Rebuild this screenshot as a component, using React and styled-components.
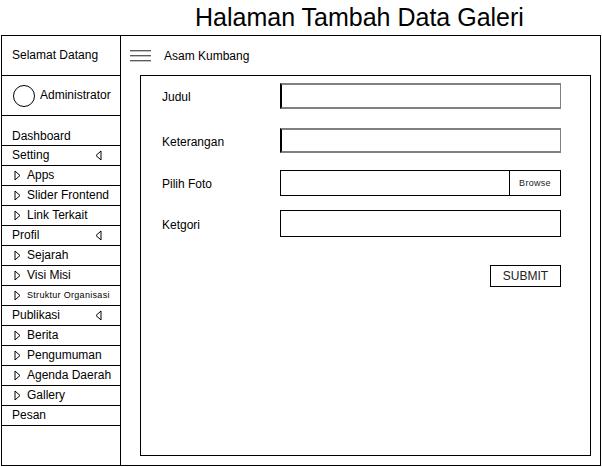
import React from "react";
import styled, { createGlobalStyle } from "styled-components";

const Global = createGlobalStyle`
  * { box-sizing: border-box; }
  html, body { margin: 0; padding: 0; background: #fff; }
  body { font-family: "Liberation Sans", Arial, sans-serif; color: #000; }
`;

const Page = styled.div`
  width: 602px;
  height: 467px;
  display: flex;
  flex-direction: column;
`;

const Title = styled.h1`
  margin: 0;
  height: 35px;
  padding-left: 195px;
  font-size: 25px;
  font-weight: 400;
  line-height: 35px;
  color: #000;
`;

const Frame = styled.div`
  margin-left: 1px;
  width: 600px;
  height: 431px;
  border: 1px solid #000;
  display: grid;
  grid-template-columns: 119px 1fr;
`;

const Sidebar = styled.nav`
  border-right: 1px solid #000;
  display: flex;
  flex-direction: column;
`;

const Row = styled.div`
  height: ${(p) => p.$h || 20}px;
  border-bottom: 1px solid #000;
  display: flex;
  align-items: ${(p) => (p.$bottom ? "flex-end" : "center")};
  padding-left: ${(p) => p.$pad ?? 10}px;
  padding-right: ${(p) => (p.$spread ? 18 : 0)}px;
  font-size: 12px;
  line-height: ${(p) => (p.$bottom ? "18px" : "19px")};
  white-space: nowrap;
  justify-content: ${(p) => (p.$spread ? "space-between" : "flex-start")};

  svg {
    flex: none;
  }
`;

const Avatar = styled.span`
  width: 22px;
  height: 22px;
  border: 1px solid #000;
  border-radius: 50%;
  margin-right: 5px;
  flex: none;
`;

const SubText = styled.span`
  margin-left: 6px;
  font-size: ${(p) => (p.$small ? "9px" : "12px")};
  letter-spacing: ${(p) => (p.$small ? "0.3px" : "0")};
`;

const Main = styled.div`
  display: flex;
  flex-direction: column;
`;

const TopBar = styled.div`
  height: 39px;
  display: flex;
  align-items: center;
  padding-left: 9px;
  gap: 13px;
  font-size: 12px;
`;

const Panel = styled.div`
  flex: 1;
  margin: 0 9px 9px 19px;
  border: 1px solid #000;
  padding: 7px 29px 0 21px;
  display: flex;
  flex-direction: column;
`;

const FormRow = styled.div`
  display: flex;
  align-items: center;
  margin-top: ${(p) => p.$mt || 0}px;
  height: ${(p) => p.$h}px;
`;

const Label = styled.label`
  width: 118px;
  flex: none;
  font-size: 12px;
  padding-top: 2px;
`;

const TextBox = styled.div`
  flex: 1;
  height: 100%;
  border-top: 2px solid #808080;
  border-bottom: 2px solid #808080;
  border-left: 2px solid #000;
  border-right: 1px solid #808080;
`;

const PlainBox = styled.div`
  flex: 1;
  height: 100%;
  border: 1px solid #000;
  display: flex;
`;

const BrowseBtn = styled.div`
  margin-left: auto;
  width: 51px;
  border-left: 1px solid #000;
  display: flex;
  align-items: center;
  justify-content: center;
  font-size: 9px;
  letter-spacing: 0.3px;
  color: #222;
`;

const SubmitRow = styled.div`
  display: flex;
  justify-content: flex-end;
  margin-top: 28px;
`;

const Submit = styled.button`
  width: 71px;
  height: 22px;
  border: 1px solid #000;
  background: #fff;
  font-family: "Liberation Sans", Arial, sans-serif;
  font-size: 12px;
  color: #222;
  padding: 0;
`;

const Hamburger = () => (
  <svg width="21" height="12" viewBox="0 0 21 12">
    <g stroke="#555" strokeWidth="1.3">
      <line x1="0" y1="0.7" x2="21" y2="0.7" />
      <line x1="0" y1="5.7" x2="21" y2="5.7" />
      <line x1="0" y1="10.7" x2="21" y2="10.7" />
    </g>
  </svg>
);

const ArrowLeft = () => (
  <svg width="7" height="11" viewBox="0 0 7 11">
    <polygon points="6,1 1,5.5 6,10" fill="none" stroke="#000" strokeWidth="1" />
  </svg>
);

const ArrowRight = () => (
  <svg width="7" height="11" viewBox="0 0 7 11">
    <polygon points="1,1 6,5.5 1,10" fill="none" stroke="#000" strokeWidth="1" />
  </svg>
);

const menu = [
  { t: "Setting", group: true },
  { t: "Apps" },
  { t: "Slider Frontend" },
  { t: "Link Terkait" },
  { t: "Profil", group: true },
  { t: "Sejarah" },
  { t: "Visi Misi" },
  { t: "Struktur Organisasi", small: true },
  { t: "Publikasi", group: true },
  { t: "Berita" },
  { t: "Pengumuman" },
  { t: "Agenda Daerah" },
  { t: "Gallery" },
  { t: "Pesan", plain: true },
];

export default function App() {
  return (
    <Page>
      <Global />
      <Title>Halaman Tambah Data Galeri</Title>
      <Frame>
        <Sidebar>
          <Row $h={40}>Selamat Datang</Row>
          <Row $h={40} $pad={11}>
            <Avatar />
            Administrator
          </Row>
          <Row $h={30} $bottom>Dashboard</Row>
          {menu.map((m) =>
            m.group ? (
              <Row key={m.t} $spread>
                <span>{m.t}</span>
                <ArrowLeft />
              </Row>
            ) : m.plain ? (
              <Row key={m.t}>{m.t}</Row>
            ) : (
              <Row key={m.t} $pad={12}>
                <ArrowRight />
                <SubText $small={m.small}>{m.t}</SubText>
              </Row>
            )
          )}
        </Sidebar>
        <Main>
          <TopBar>
            <Hamburger />
            <span>Asam Kumbang</span>
          </TopBar>
          <Panel>
            <FormRow $h={26}>
              <Label>Judul</Label>
              <TextBox />
            </FormRow>
            <FormRow $mt={19} $h={25}>
              <Label>Keterangan</Label>
              <TextBox />
            </FormRow>
            <FormRow $mt={17} $h={26}>
              <Label>Pilih Foto</Label>
              <PlainBox>
                <BrowseBtn>Browse</BrowseBtn>
              </PlainBox>
            </FormRow>
            <FormRow $mt={14} $h={27}>
              <Label>Ketgori</Label>
              <PlainBox />
            </FormRow>
            <SubmitRow>
              <Submit>SUBMIT</Submit>
            </SubmitRow>
          </Panel>
        </Main>
      </Frame>
    </Page>
  );
}
